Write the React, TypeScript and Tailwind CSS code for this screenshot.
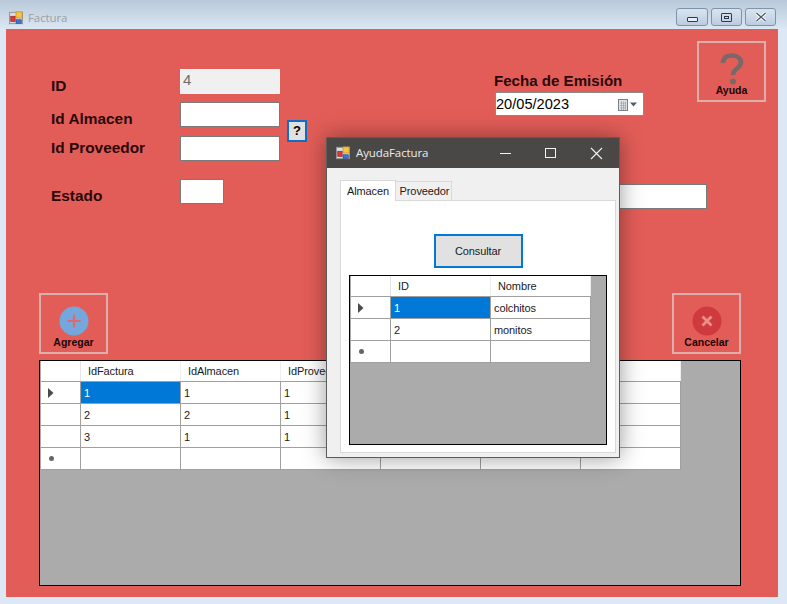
import React from "react";

const ui = { fontFamily: '"Liberation Sans", Arial, sans-serif' };
const segoe = { fontFamily: '"Open Sans", "Noto Sans", sans-serif' };

function AppIcon({ mt }: { mt: string }) {
  return (
    <svg width="14" height="14" viewBox="0 0 16 16" className={`shrink-0 ${mt}`}>
      <rect x="0.5" y="1.5" width="15" height="13" fill="#d9dde3" stroke="#8b8f96" />
      <rect x="8" y="1" width="7" height="7" fill="#f6c343" stroke="#b98a1e" strokeWidth="0.7" />
      <rect x="2" y="6" width="5" height="6" fill="#d93a32" stroke="#8e1f1a" strokeWidth="0.7" />
      <rect x="8" y="10" width="6" height="4" fill="#3f74cf" stroke="#23468a" strokeWidth="0.7" />
    </svg>
  );
}

function DataGrid({ headers, rows }: { headers: string[]; rows: string[][] }) {
  return (
    <div className="flex flex-col w-fit text-[11px] tracking-[-0.1px] text-[#1a1a1a]" style={ui}>
      <div className="flex h-[21px] bg-white border-b border-[#a0a0a0]">
        <div className="w-[40px] shrink-0 border-r border-[#e4e4e4]" />
        {headers.map((h, i) => (
          <div key={i} className="w-[100px] pl-[7px] pt-[1px] shrink-0 border-r border-[#eeeeee] flex items-center whitespace-nowrap overflow-hidden">
            {h}
          </div>
        ))}
      </div>
      {rows.map((r, i) => (
        <div key={i} className="flex h-[22px] bg-white border-b border-[#a0a0a0]">
          <div className="w-[40px] shrink-0 border-r border-[#a0a0a0] flex items-center pl-[6px]">
            {i === 0 && (
              <svg width="7" height="10" viewBox="0 0 7 10">
                <path d="M1 0 L6.5 5 L1 10 Z" fill="#4a4a4a" />
              </svg>
            )}
            {i === rows.length - 1 && (
              <span className="block w-[5px] h-[5px] rounded-full bg-[#666] ml-[2px]" />
            )}
          </div>
          {headers.map((_, j) => (
            <div
              key={j}
              className={`w-[100px] shrink-0 border-r border-[#a0a0a0] flex items-center pl-[3px] pt-[1px] ${
                i === 0 && j === 0 ? "bg-[#0078d7] text-white" : ""
              }`}
            >
              {r[j] ?? ""}
            </div>
          ))}
        </div>
      ))}
    </div>
  );
}

function Label({ children, mt }: { children: React.ReactNode; mt: string }) {
  return (
    <div className={`w-[129px] h-[17px] leading-[18px] text-[15.4px] font-bold text-[#2a0808] shrink-0 ${mt}`}>
      {children}
    </div>
  );
}

function ImgButton({ label, children }: { label: string; children: React.ReactNode }) {
  return (
    <div className="w-[69px] h-[61px] border-2 border-[#dcaeae] flex flex-col items-center shrink-0">
      <div className="h-[40px] flex items-end justify-center">{children}</div>
      <div className="text-[10.5px] font-bold leading-[12px] text-[#1c0505] mt-[1px]">{label}</div>
    </div>
  );
}

function Ctl({ children, w }: { children: React.ReactNode; w: string }) {
  return (
    <div className={`${w} h-[18px] rounded-[3px] border border-[#7f93ab] bg-gradient-to-b from-[#d9e4f0] to-[#bccde0] flex items-center justify-center`}>
      {children}
    </div>
  );
}

export default function App() {
  return (
    <div className="relative w-[787px] h-[604px] overflow-hidden bg-[#dce8f5]" style={ui}>
      {/* Title bar */}
      <div className="h-[29px] bg-gradient-to-b from-[#b9c9d9] to-[#dbe7f3] flex items-center pl-[9px] pr-[11px]">
        <AppIcon mt="mt-[6px]" />
        <span className="ml-[5px] text-[11.5px] tracking-[-0.1px] text-[#9b9fa3] mt-[7px]" style={segoe}>
          Factura
        </span>
        <div className="ml-auto flex gap-[3px] mt-[5px]">
          <Ctl w="w-[32px]">
            <div className="w-[11px] h-[5px] border border-[#2f3b4a] bg-[#e8eef5] rounded-[1px] mt-[4px]" />
          </Ctl>
          <Ctl w="w-[31px]">
            <div className="w-[11px] h-[9px] border border-[#2f3b4a] rounded-[1px] flex items-center justify-center">
              <div className="w-[5px] h-[3px] border border-[#2f3b4a]" />
            </div>
          </Ctl>
          <Ctl w="w-[31px]">
            <svg width="12" height="10" viewBox="0 0 12 10">
              <path d="M1.5 1 L10.5 9 M10.5 1 L1.5 9" stroke="#fff" strokeWidth="3.2" />
              <path d="M1.5 1 L10.5 9 M10.5 1 L1.5 9" stroke="#4a5868" strokeWidth="1.4" />
            </svg>
          </Ctl>
        </div>
      </div>

      {/* Client */}
      <div className="ml-[6px] w-[772px] h-[568px] bg-[#e35d58] flex flex-col overflow-hidden">
        <div className="h-[264px] flex shrink-0">
          {/* Fields */}
          <div className="pl-[45px] flex flex-col shrink-0">
            <div className="flex mt-[40px]">
              <Label mt="mt-[8px]">ID</Label>
              <div className="w-[100px] h-[25px] bg-[#f0f0f0] border border-[#f6f6f6] text-[15px] text-[#6d6d6d] pl-[2px] leading-[20px]">
                4
              </div>
            </div>
            <div className="flex mt-[8px]">
              <Label mt="mt-[8px]">Id Almacen</Label>
              <div className="w-[100px] h-[25px] bg-white border border-[#7a7a7a]" />
            </div>
            <div className="flex mt-[9px]">
              <Label mt="mt-[3px]">Id Proveedor</Label>
              <div className="w-[100px] h-[25px] bg-white border border-[#7a7a7a]" />
            </div>
            <div className="flex mt-[18px]">
              <Label mt="mt-[8px]">Estado</Label>
              <div className="w-[44px] h-[25px] bg-white border border-[#7a7a7a]" />
            </div>
          </div>

          <div className="ml-[7px] mt-[91px] w-[20px] h-[22px] border-2 border-[#0f6fc6] bg-[#e1e1e1] text-[13px] font-bold text-black flex items-center justify-center shrink-0">
            ?
          </div>

          {/* Date */}
          <div className="ml-[187px] w-[203px] shrink-0 flex flex-col">
            <div className="mt-[43px] h-[18px] leading-[18px] text-[15.1px] font-bold text-[#2a0808] whitespace-nowrap">
              Fecha de Emisión
            </div>
            <div className="mt-[2px] ml-[1px] w-[149px] h-[24px] bg-white border border-[#8a8a8a] flex items-center text-[14.6px] text-black">
              <span className="pt-[1px]">20/05/2023</span>
              <svg width="22" height="14" viewBox="0 0 22 14" className="ml-auto mr-[4px] mt-[1px]">
                <rect x="1.5" y="1.5" width="9" height="11" fill="#dfe3e8" stroke="#7a8088" />
                <path d="M3 5H9M3 7.5H9M3 10H9M4.5 3.5V12M6.5 3.5V12M8.5 3.5V12" stroke="#9aa0a8" strokeWidth="0.7" />
                <path d="M13 4.5H20L16.5 8.5Z" fill="#4f5d78" />
              </svg>
            </div>
            <div className="mt-[68px] ml-[112px] w-[101px] h-[25px] bg-white border border-[#7a7a7a] shrink-0" />
          </div>

          <div className="mt-[12px]">
            <ImgButton label="Ayuda">
              <svg width="24" height="32" viewBox="0 0 24 32" className="-mb-[2px] relative">
                <path d="M3 10 C3 4.5 7 2.5 12 2.5 C17.5 2.5 21 5.5 21 9.5 C21 15 13 15.5 13 22" fill="none" stroke="#7a6868" strokeWidth="4.6" />
                <circle cx="13" cy="28.5" r="3" fill="#7a6868" />
              </svg>
            </ImgButton>
          </div>
        </div>

        {/* Buttons row */}
        <div className="flex justify-between pl-[33px] pr-[37px] shrink-0">
          <ImgButton label="Agregar">
            <svg width="30" height="30" viewBox="0 0 30 30" className="-mb-[1px]">
              <circle cx="15" cy="15" r="14.5" fill="#74a8dc" />
              <path d="M15 8.5V21.5M8.5 15H21.5" stroke="#df6a6c" strokeWidth="2.2" />
            </svg>
          </ImgButton>
          <ImgButton label="Cancelar">
            <svg width="30" height="30" viewBox="0 0 30 30" className="-mb-[1px]">
              <circle cx="15" cy="15" r="14.5" fill="#cf3a3f" />
              <path d="M10.5 10.5L19.5 19.5M19.5 10.5L10.5 19.5" stroke="#ec8f88" strokeWidth="2.8" />
            </svg>
          </ImgButton>
        </div>

        {/* Main grid */}
        <div className="mt-[6px] ml-[33px] w-[702px] h-[226px] shrink-0 border border-black bg-[#ababab] pl-[1px] overflow-hidden">
          <DataGrid
            headers={["IdFactura", "IdAlmacen", "IdProveedor", "", "", ""]}
            rows={[
              ["1", "1", "1"],
              ["2", "2", "1"],
              ["3", "1", "1"],
              [],
            ]}
          />
        </div>
      </div>

      {/* Dialog window */}
      <div className="absolute left-[326px] top-[137px] w-[294px] h-[321px] border border-[#5c5c5c] bg-[#f0f0f0] shadow-[0_0_22px_rgba(0,0,0,0.4)] flex flex-col">
        <div className="h-[30px] bg-[#4a4846] flex items-center pl-[9px] shrink-0">
          <AppIcon mt="" />
          <span className="ml-[6px] text-[11.5px] tracking-[-0.1px] text-[#ececec]" style={segoe}>
            AyudaFactura
          </span>
          <svg width="120" height="14" viewBox="0 0 120 14" className="ml-auto mr-[16px]" fill="none" stroke="#f2f2f2">
            <path d="M17 7.5H28" />
            <rect x="62.5" y="2.5" width="10" height="9" />
            <path d="M108 2L119 13M119 2L108 13" strokeWidth="1.1" />
          </svg>
        </div>
        <div className="pl-[13px] pr-[4px] pt-[11px] flex flex-col flex-1">
          <div className="flex items-end h-[21px] text-[11px] tracking-[-0.1px] text-[#1a1a1a]">
            <div className="w-[56px] h-[21px] bg-white border border-b-0 border-[#d9d9d9] flex items-center justify-center relative z-10 -mb-[1px]">
              Almacen
            </div>
            <div className="w-[57px] h-[19px] bg-[#f0f0f0] border border-b-0 border-[#d9d9d9] -ml-[1px] flex items-center justify-center pl-[2px]">
              Proveedor
            </div>
          </div>
          <div className="w-[276px] h-[253px] bg-white border border-[#d9d9d9] flex flex-col items-center">
            <div className="mt-[33px] w-[89px] h-[34px] border-2 border-[#0078d7] bg-[#e1e1e1] text-[11px] tracking-[-0.1px] text-[#1a1a1a] flex items-center justify-center shrink-0 pt-[1px]">
              Consultar
            </div>
            <div className="mt-[7px] w-[258px] h-[170px] border border-black bg-[#ababab] pl-[1px] overflow-hidden shrink-0">
              <DataGrid headers={["ID", "Nombre"]} rows={[["1", "colchitos"], ["2", "monitos"], []]} />
            </div>
          </div>
        </div>
      </div>
    </div>
  );
}
